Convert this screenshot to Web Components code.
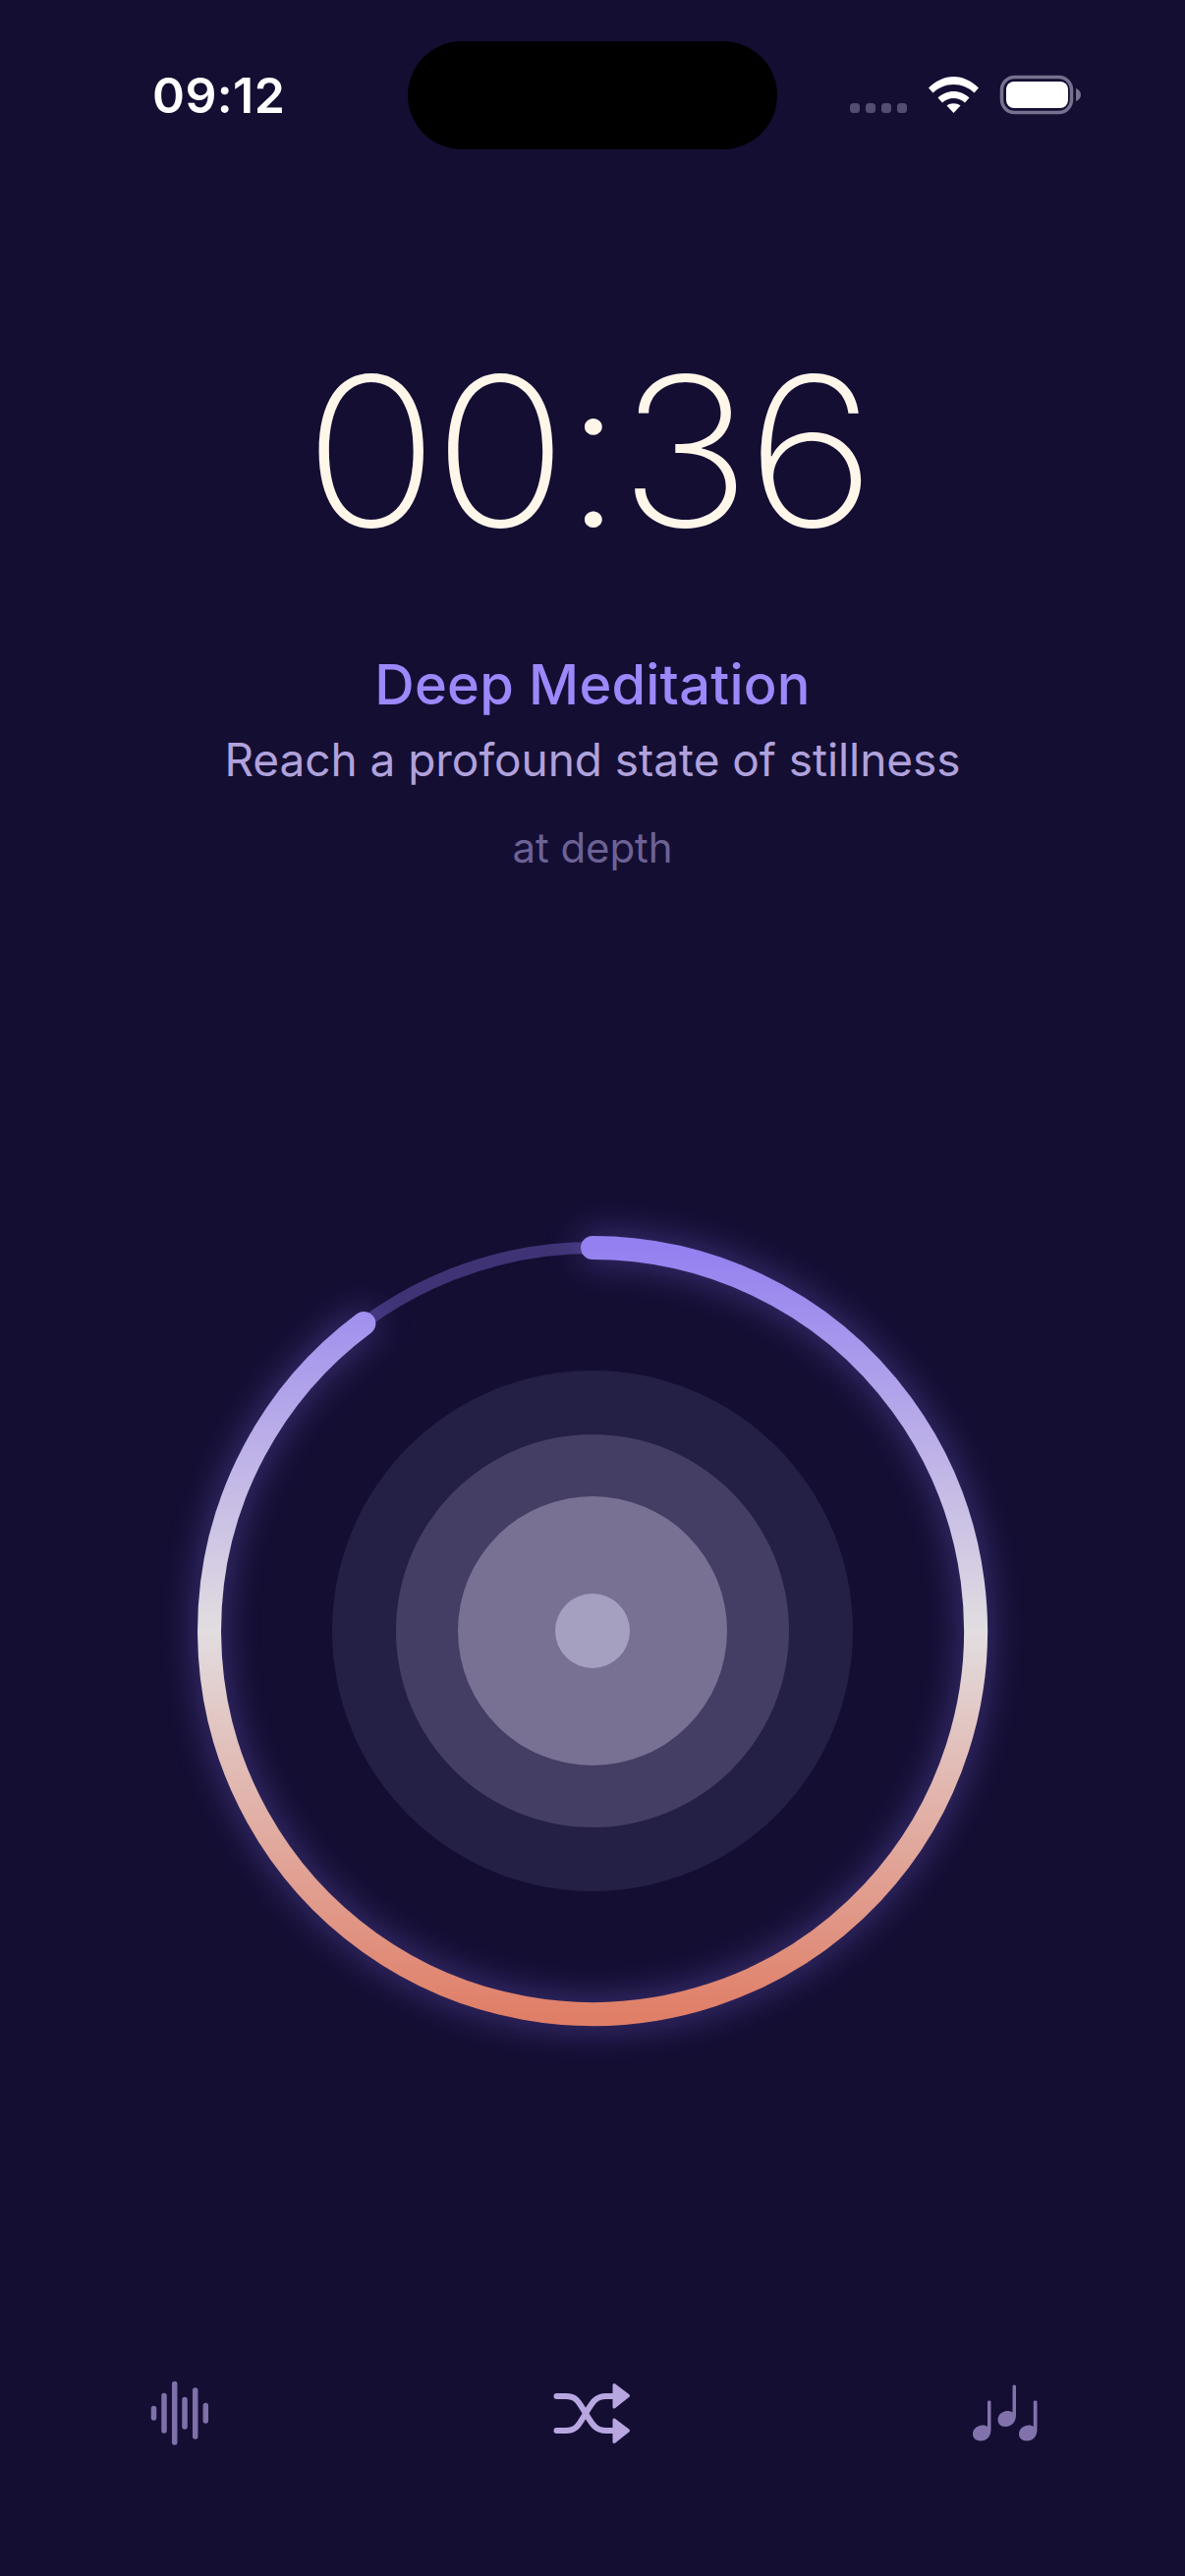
<!DOCTYPE html>
<html lang="en">
<head>
<meta charset="utf-8">
<title>Deep Meditation</title>
<style>
  html, body { margin: 0; padding: 0; background: #140e33; }
</style>
</head>
<body>
<app-screen>
  <status-bar time="09:12"></status-bar>
  <timer-display>00:36</timer-display>
  <session-label title="Deep Meditation" subtitle="Reach a profound state of stillness" note="at depth"></session-label>
  <breath-ring></breath-ring>
  <bottom-nav></bottom-nav>
</app-screen>

<script>
class AppScreen extends HTMLElement {
  constructor() {
    super();
    this.attachShadow({ mode: "open" });
    this.shadowRoot.innerHTML = `
      <style>
        :host {
          display: flex;
          flex-direction: column;
          width: 1206px;
          height: 2622px;
          overflow: hidden;
          background: #140e33;
          font-family: Inter, "Liberation Sans", sans-serif;
        }
      </style>
      <slot></slot>
    `;
  }
}

class StatusBar extends HTMLElement {
  constructor() {
    super();
    this.attachShadow({ mode: "open" });
    this.shadowRoot.innerHTML = `
      <style>
        :host {
          display: grid;
          grid-template-columns: 415px 376px 1fr;
          align-items: center;
          height: 110px;
          padding-top: 42px;
        }
        .time {
          padding-left: 155px;
          font-size: 50px;
          font-weight: 600;
          letter-spacing: 0.4px;
          line-height: 110px;
          color: #fff;
        }
        .island { height: 110px; border-radius: 55px; background: #000; }
        .icons { display: block; margin-left: 74px; }
      </style>
      <div class="time"></div>
      <div class="island"></div>
      <svg class="icons" width="260" height="60" viewBox="865 68 260 60">
        <g fill="#534e70">
          <rect x="865" y="106" width="10" height="10" rx="3.5"/>
          <rect x="881" y="106" width="10" height="10" rx="3.5"/>
          <rect x="897" y="106" width="10" height="10" rx="3.5"/>
          <rect x="913" y="106" width="10" height="10" rx="3.5"/>
        </g>
        <path fill="#fff" d="M945 90.5C952 83.5 961 79 970.5 79S989 83.500 996 90.500L991.500 95.500C985.500 90 978.500 87 970.500 87S955.500 90 949.500 95.500Z"/>
        <path fill="#fff" d="M954.500 100.500C959 96.500 964.500 94 970.500 94S982 96.500 986.500 100.500L982 105.500C978.500 102.500 975 101 970.500 101S962.500 102.500 959 105.500Z"/>
        <path fill="#fff" d="M963.500 108.500C965.500 107 968 106.200 970.500 106.200S975.500 107 977.500 108.500L970.500 116Z"/>
        <rect x="1019.500" y="79.500" width="71" height="36" rx="13" fill="none" stroke="#77718f" stroke-width="3.500"/>
        <rect x="1024" y="84" width="63" height="27" rx="8" fill="#fff"/>
        <path fill="#77718f" d="M1095 91C1098 92 1100 94.500 1100 97.500S1098 103 1095 104Z"/>
      </svg>
    `;
    this.shadowRoot.querySelector(".time").textContent = this.getAttribute("time");
  }
}

class TimerDisplay extends HTMLElement {
  constructor() {
    super();
    this.attachShadow({ mode: "open" });
    this.shadowRoot.innerHTML = `
      <style>
        :host {
          display: block;
          margin-top: 167px;
          padding-right: 10px;
          height: 280px;
          text-align: center;
          font-size: 212px;
          font-weight: 150;
          line-height: 280px;
          letter-spacing: -5px;
          color: #fff6ea;
        }
        span { display: inline-block; transform: scaleX(1.07); }
      </style>
      <span><slot></slot></span>
    `;
  }
}

class SessionLabel extends HTMLElement {
  constructor() {
    super();
    this.attachShadow({ mode: "open" });
    this.shadowRoot.innerHTML = `
      <style>
        :host { display: block; text-align: center; margin-top: 57px; }
        div { white-space: nowrap; }
        .title { font-size: 56px; font-weight: 500; line-height: 82px; color: #9d88fb; letter-spacing: 0.2px; }
        .subtitle { font-size: 46px; font-weight: 400; line-height: 70px; color: #b0a2dc; letter-spacing: -0.05px; }
        .note { margin-top: 25px; font-size: 42px; font-weight: 400; line-height: 60px; color: #6c6295; letter-spacing: -0.1px; }
      </style>
      <div class="title"></div>
      <div class="subtitle"></div>
      <div class="note"></div>
    `;
    for (const key of ["title", "subtitle", "note"]) {
      this.shadowRoot.querySelector("." + key).textContent = this.getAttribute(key);
    }
  }
}

class BreathRing extends HTMLElement {
  constructor() {
    super();
    this.attachShadow({ mode: "open" });
    this.shadowRoot.innerHTML = `
      <style>
        :host { display: flex; justify-content: center; margin-top: 317px; }
        svg { display: block; overflow: visible; }
        .glow { filter: drop-shadow(0 0 18px rgba(136, 116, 240, 0.45)); }
      </style>
      <svg width="900" height="900" viewBox="0 0 900 900">
        <defs>
          <linearGradient id="arc" gradientUnits="userSpaceOnUse" x1="0" y1="60" x2="0" y2="840">
            <stop offset="0" stop-color="#9480f0"/>
            <stop offset="0.5" stop-color="#e2dde0"/>
            <stop offset="1" stop-color="#e07f68"/>
          </linearGradient>
        </defs>
        <circle cx="450" cy="450" r="265" fill="#241f45"/>
        <circle cx="450" cy="450" r="200" fill="#443d64"/>
        <circle cx="450" cy="450" r="137" fill="#787194"/>
        <circle cx="450" cy="450" r="38" fill="#a5a0c0"/>
        <circle cx="450" cy="450" r="390" fill="none" stroke="#3f3375" stroke-width="12"/>
        <path class="glow" d="M450 60A390 390 0 1 1 217.400 137" fill="none" stroke="url(#arc)" stroke-width="24" stroke-linecap="round"/>
      </svg>
    `;
  }
}

class BottomNav extends HTMLElement {
  constructor() {
    super();
    this.attachShadow({ mode: "open" });
    this.shadowRoot.innerHTML = `
      <style>
        :host {
          display: grid;
          grid-template-columns: 410px 420px 120px;
          padding-left: 130px;
          margin-top: 289px;
        }
        svg { display: block; }
      </style>
      <svg width="120" height="110" viewBox="0 0 120 110" fill="none" stroke="#7f70aa" stroke-width="5.500" stroke-linecap="round">
        <path d="M26.500 52.500V62M37 39.500V75M47.700 27.500V87M58 43.500V71M68.700 34V81M79.300 49.500V65"/>
      </svg>
      <svg width="120" height="110" viewBox="0 0 120 110">
        <path d="M26.500 40H36C47 40 49 46 56 57.500S66 75 77 75H86M26.500 75H36C47 75 49 69 56 57.500S66 40 77 40H86" fill="none" stroke="#b8a6e0" stroke-width="6" stroke-linecap="round"/>
        <path fill="#b8a6e0" stroke="#b8a6e0" stroke-width="3" stroke-linejoin="round" d="M85 28.500L99.500 39.500L85 51ZM85 64L99.500 75L85 86.500Z"/>
      </svg>
      <svg width="120" height="110" viewBox="0 0 120 110" fill="#8172ac">
        <path d="M45 45.500C45 44 48.500 44 48.500 45.500V74C48.500 81 44 85.500 38 85.500C33 85.500 30 82.500 30 78.500C30 73 35 69.500 40 69.500C42 69.500 43.800 70 45 71Z"/>
        <path d="M70.500 30C70.500 28 74 28 74 30V59.500C74 66 69.500 71 63.500 71C58.500 71 55.500 68 55.500 64C55.500 58.500 60.500 55 65.500 55C67.500 55 69.300 55.500 70.500 56.500Z"/>
        <path d="M91.800 45.500C91.800 44 95.500 44 95.500 45.500V74C95.500 81 91 85.500 85 85.500C80 85.500 77 82.500 77 78.500C77 73 82 69.500 87 69.500C89 69.500 90.600 70 91.800 71Z"/>
      </svg>
    `;
  }
}

customElements.define("app-screen", AppScreen);
customElements.define("status-bar", StatusBar);
customElements.define("timer-display", TimerDisplay);
customElements.define("session-label", SessionLabel);
customElements.define("breath-ring", BreathRing);
customElements.define("bottom-nav", BottomNav);
</script>
</body>
</html>
